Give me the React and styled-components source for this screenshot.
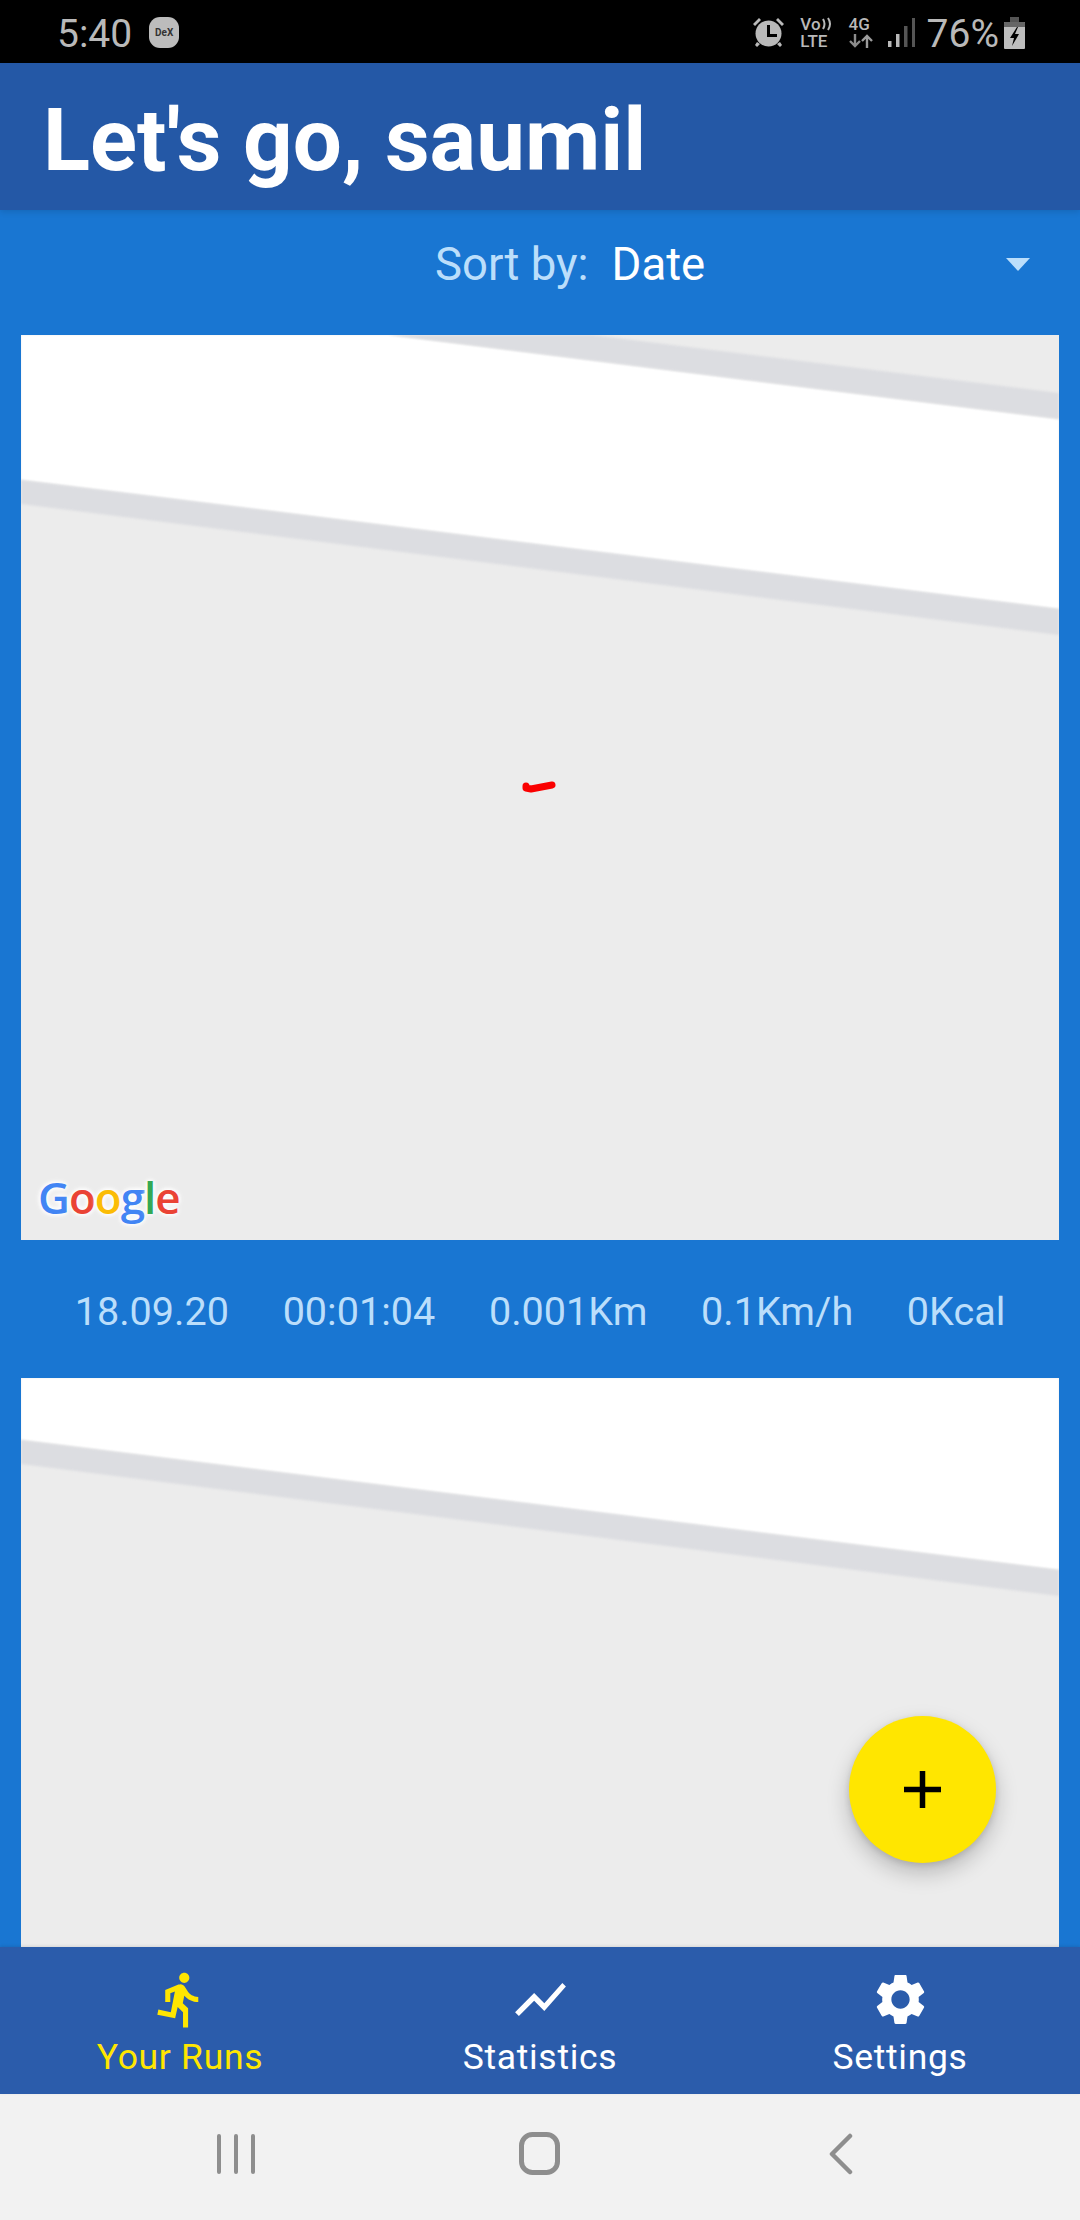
import React from "react";
import styled, { createGlobalStyle } from "styled-components";

const Global = createGlobalStyle`
  html, body { margin: 0; padding: 0; background: #1976d2; }
  * { box-sizing: border-box; }
  body { font-family: Roboto, "Liberation Sans", sans-serif; }
`;

const Screen = styled.div`
  position: relative;
  width: 1080px;
  height: 2220px;
  display: flex;
  flex-direction: column;
  overflow: hidden;
  background: #1976d2;
`;

const StatusBar = styled.div`
  height: 63px;
  flex: none;
  background: #000;
  color: #b9b9b9;
  display: flex;
  align-items: center;
  justify-content: space-between;
  padding: 2px 55px 0 57px;
`;
const StatusGroup = styled.div`
  display: flex;
  align-items: center;
  gap: ${(p) => p.$gap || 0}px;
`;
const StatusText = styled.span`
  font-size: 39px;
  line-height: 50px;
  padding-top: 3px;
  font-weight: 400;
  color: #b9b9b9;
  margin-left: ${(p) => p.$ml || 0}px;
`;
const StatusIcon = styled.span`
  display: flex;
  margin-left: ${(p) => p.$ml || 0}px;
`;
const DexBadge = styled.div`
  width: 30px;
  height: 31px;
  border-radius: 11px;
  background: #bcbcbc;
  color: #333;
  font-size: 10px;
  font-weight: 700;
  display: flex;
  align-items: center;
  justify-content: center;
`;
const TinyStack = styled.div`
  display: flex;
  flex-direction: column;
  align-items: flex-start;
  gap: 3px;
  margin-left: ${(p) => p.$ml || 0}px;
  font-weight: 500;
  font-size: 17px;
  line-height: 14px;
  color: #b9b9b9;
`;
const TinyRow = styled.div`
  display: flex;
  align-items: center;
  gap: 1px;
`;

const Header = styled.header`
  height: 147px;
  flex: none;
  position: relative;
  z-index: 2;
  background: #2458a6;
  box-shadow: 0 2px 6px rgba(0, 0, 0, 0.12);
  display: flex;
  align-items: center;
  padding: 8px 0 0 43px;
`;
const Title = styled.h1`
  margin: 0;
  color: #fff;
  font-size: 87px;
  font-weight: 700;
  line-height: 1;
`;

const Main = styled.main`
  flex: 1;
  min-height: 0;
  overflow: hidden;
  display: flex;
  flex-direction: column;
`;
const SortRow = styled.div`
  flex: none;
  height: 125px;
  display: flex;
  align-items: center;
  padding: 0 50px 16px 435px;
  font-size: 45.5px;
`;
const SortLabel = styled.span`
  color: #bbdefb;
`;
const SortValue = styled.span`
  color: #fff;
  margin-left: 23px;
`;
const Caret = styled.div`
  margin-left: auto;
  width: 0;
  height: 0;
  border-left: 12.5px solid transparent;
  border-right: 12.5px solid transparent;
  border-top: 13px solid #bbdefb;
`;

const MapCard = styled.div`
  flex: none;
  position: relative;
  width: 1038px;
  height: 905px;
  margin: 0 21px;
  background: #ececec;
  overflow: hidden;
`;
const MapSvg = styled.svg`
  display: block;
  width: 100%;
  height: 100%;
`;
const Land = styled.polygon`
  fill: #fff;
  filter: blur(1px);
`;
const Road = styled.polygon`
  fill: #dcdde1;
  filter: blur(1px);
`;
const Trace = styled.path`
  fill: none;
  stroke: #fa0000;
  stroke-width: 7px;
  stroke-linejoin: round;
  stroke-linecap: round;
`;
const GoogleMark = styled.div`
  position: absolute;
  left: 17px;
  bottom: 18px;
  font-family: "Open Sans", Roboto, sans-serif;
  font-size: 44px;
  font-weight: 600;
  line-height: 50px;
  letter-spacing: -1px;
  text-shadow: 0 0 4px #fff, 0 0 5px #fff, 0 0 7px #fff;
`;
const GLetter = styled.span`
  color: ${(p) => p.$c};
`;

const Stats = styled.div`
  flex: none;
  height: 138px;
  margin: 0 21px;
  padding-top: 5px;
  display: flex;
  align-items: center;
  justify-content: space-evenly;
  color: #bbdefb;
  font-size: 39.6px;
`;

const Fab = styled.button`
  position: absolute;
  left: 849px;
  top: 1716px;
  z-index: 3;
  width: 147px;
  height: 147px;
  border: 0;
  padding: 0;
  border-radius: 50%;
  background: #ffe600;
  box-shadow: 0 10px 22px rgba(0, 0, 0, 0.22), 0 2px 6px rgba(0, 0, 0, 0.12);
  display: flex;
  align-items: center;
  justify-content: center;
`;

const Nav = styled.nav`
  height: 147px;
  flex: none;
  position: relative;
  z-index: 2;
  background: #2b5cab;
  box-shadow: 0 -1px 3px rgba(0, 0, 0, 0.1);
  display: grid;
  grid-template-columns: repeat(3, 1fr);
`;
const NavItem = styled.div`
  display: flex;
  flex-direction: column;
  align-items: center;
  padding-top: 22px;
  color: ${(p) => (p.$active ? "#ffe600" : "#fff")};
`;
const NavLabel = styled.span`
  font-size: 35.5px;
  line-height: 40px;
  margin-top: 7px;
  letter-spacing: 0.7px;
`;

const SystemBar = styled.div`
  flex: none;
  height: 126px;
  background: #f2f2f2;
  display: grid;
  grid-template-columns: repeat(3, 1fr);
  align-items: center;
  padding-bottom: 6px;
`;
const SystemSlot = styled.div`
  display: flex;
  justify-content: center;
  padding-left: ${(p) => p.$pl || 0}px;
  padding-right: ${(p) => p.$pr || 0}px;
`;

const Alarm = () => (
  <svg width="33" height="31" viewBox="0 0 33 31" fill="#b9b9b9">
    <circle cx="16.5" cy="16.5" r="13" />
    <path d="M1 7l6-6 2 2-6 6zM32 7l-6-6-2 2 6 6zM5 25l3 2-3 3-2-2zM28 25l-3 2 3 3 2-2z" />
    <path d="M15 8h3v9h7v3H15z" fill="#000" />
  </svg>
);
const Waves = () => (
  <svg width="12" height="14" viewBox="0 0 12 14" fill="none" stroke="#b9b9b9" strokeWidth="2">
    <path d="M1 2q3 5 0 10M6 1q4 6 0 12" />
  </svg>
);
const Arrows = () => (
  <svg width="24" height="14" viewBox="0 0 24 14" fill="none" stroke="#8c8c8c" strokeWidth="2.4">
    <path d="M6 0v12M1 7l5 5 5-5" />
    <path d="M18 14V2M13 7l5-5 5 5" stroke="#9c9c9c" />
  </svg>
);
const Signal = () => (
  <svg width="27" height="31" viewBox="0 0 27 31">
    <rect x="0" y="24" width="3.5" height="6" fill="#b9b9b9" />
    <rect x="8" y="17" width="3.5" height="13" fill="#b9b9b9" />
    <rect x="16" y="9" width="3.5" height="21" fill="#555" />
    <rect x="24" y="1" width="3" height="29" fill="#555" />
  </svg>
);
const Battery = () => (
  <svg width="21" height="32" viewBox="0 0 21 32">
    <path d="M6 0h9v5H6z" fill="#555" />
    <path d="M1 5h19a1 1 0 0 1 1 1v25a1 1 0 0 1-1 1H1a1 1 0 0 1-1-1V6a1 1 0 0 1 1-1z" fill="#bdbdbd" />
    <path d="M1 5h19a1 1 0 0 1 1 1v4H0V6a1 1 0 0 1 1-1z" fill="#666" />
    <path d="M13 10l-7 11h4l-2 8 7-12h-4l3-7z" fill="#000" />
  </svg>
);

const RunIcon = () => (
  <svg width="61" height="61" viewBox="0 0 24 24" fill="currentColor">
    <path d="M13.49 5.48c1.1 0 2-.9 2-2s-.9-2-2-2-2 .9-2 2 .9 2 2 2zm-3.6 13.9l1-4.4 2.1 2v6h2v-7.5l-2.1-2 .6-3c1.3 1.5 3.3 2.5 5.5 2.5v-2c-1.9 0-3.5-1-4.3-2.4l-1-1.6c-.4-.6-1-1-1.7-1-.3 0-.5.1-.8.1l-5.2 2.2v4.7h2v-3.4l1.8-.7-1.6 8.1-4.9-1-.4 2 7 1.4z" />
  </svg>
);
const ChartIcon = () => (
  <svg width="61" height="61" viewBox="0 0 24 24" fill="currentColor">
    <path d="M3.5 18.49l6-6.01 4 4L22 6.92l-1.41-1.41-7.09 7.97-4-4L2 16.99z" />
  </svg>
);
const GearIcon = () => (
  <svg width="61" height="61" viewBox="0 0 24 24" fill="currentColor">
    <path d="M19.14 12.94c.04-.3.06-.61.06-.94 0-.32-.02-.64-.07-.94l2.03-1.58c.18-.14.23-.41.12-.61l-1.92-3.32c-.12-.22-.37-.29-.59-.22l-2.39.96c-.5-.38-1.03-.7-1.62-.94l-.36-2.54c-.04-.24-.24-.41-.48-.41h-3.84c-.24 0-.43.17-.47.41l-.36 2.54c-.59.24-1.13.57-1.62.94l-2.39-.96c-.22-.08-.47 0-.59.22L2.74 8.87c-.12.21-.08.47.12.61l2.03 1.58c-.05.3-.09.63-.09.94s.02.64.07.94l-2.03 1.58c-.18.14-.23.41-.12.61l1.92 3.32c.12.22.37.29.59.22l2.39-.96c.5.38 1.03.7 1.62.94l.36 2.54c.05.24.24.41.48.41h3.84c.24 0 .44-.17.47-.41l.36-2.54c.59-.24 1.13-.56 1.62-.94l2.39.96c.22.08.47 0 .59-.22l1.92-3.32c.12-.22.07-.47-.12-.61l-2.01-1.58zM12 15.6c-1.98 0-3.6-1.62-3.6-3.6s1.62-3.6 3.6-3.6 3.6 1.62 3.6 3.6-1.62 3.6-3.6 3.6z" />
  </svg>
);

const GOOGLE = [
  ["G", "#4285f4"],
  ["o", "#ea4335"],
  ["o", "#fbbc05"],
  ["g", "#4285f4"],
  ["l", "#34a853"],
  ["e", "#ea4335"],
];

const STATS = ["18.09.20", "00:01:04", "0.001Km", "0.1Km/h", "0Kcal"];

export default function App() {
  return (
    <Screen>
      <Global />
      <StatusBar>
        <StatusGroup $gap={17}>
          <StatusText>5:40</StatusText>
          <DexBadge>DeX</DexBadge>
        </StatusGroup>
        <StatusGroup>
          <Alarm />
          <TinyStack $ml={15}>
            <TinyRow>Vo<Waves /></TinyRow>
            <span>LTE</span>
          </TinyStack>
          <TinyStack $ml={15}>
            <span>4G</span>
            <Arrows />
          </TinyStack>
          <StatusIcon $ml={15}><Signal /></StatusIcon>
          <StatusText $ml={12}>76%</StatusText>
          <StatusIcon $ml={5}><Battery /></StatusIcon>
        </StatusGroup>
      </StatusBar>

      <Header>
        <Title>Let's go, saumil</Title>
      </Header>

      <Main>
        <SortRow>
          <SortLabel>Sort by:</SortLabel>
          <SortValue>Date</SortValue>
          <Caret />
        </SortRow>

        <MapCard>
          <MapSvg viewBox="0 0 1038 905">
            <Land points="0,0 368,0 1038,84 1038,274 0,145" />
            <Road points="368,0 571,0 1038,58 1038,84" />
            <Road points="0,145 1038,274 1038,300 0,169" />
            <Trace d="M531 450 L510 454 L505 453 L505 451" />
          </MapSvg>
          <GoogleMark>
            {GOOGLE.map(([l, c], i) => (
              <GLetter key={i} $c={c}>{l}</GLetter>
            ))}
          </GoogleMark>
        </MapCard>

        <Stats>
          {STATS.map((s) => (
            <span key={s}>{s}</span>
          ))}
        </Stats>

        <MapCard>
          <MapSvg viewBox="0 0 1038 905">
            <Land points="0,0 1038,0 1038,192 0,62" />
            <Road points="0,62 1038,192 1038,218 0,86" />
          </MapSvg>
        </MapCard>
      </Main>

      <Fab aria-label="Add">
        <svg width="37" height="37" viewBox="0 0 37 37" fill="#000">
          <path d="M15.75 0h5.5v15.75H37v5.5H21.25V37h-5.5V21.25H0v-5.5h15.75z" />
        </svg>
      </Fab>

      <Nav>
        <NavItem $active>
          <RunIcon />
          <NavLabel>Your Runs</NavLabel>
        </NavItem>
        <NavItem>
          <ChartIcon />
          <NavLabel>Statistics</NavLabel>
        </NavItem>
        <NavItem>
          <GearIcon />
          <NavLabel>Settings</NavLabel>
        </NavItem>
      </Nav>

      <SystemBar>
        <SystemSlot $pl={112}>
          <svg width="38" height="42" viewBox="0 0 38 42" stroke="#8e8e8e" strokeWidth="4" strokeLinecap="round">
            <path d="M2 3v36M19 3v36M36 3v36" />
          </svg>
        </SystemSlot>
        <SystemSlot>
          <svg width="42" height="44" viewBox="0 0 42 44" fill="none" stroke="#8e8e8e" strokeWidth="5">
            <rect x="2.5" y="2.5" width="36" height="38" rx="11" />
          </svg>
        </SystemSlot>
        <SystemSlot $pr={118}>
          <svg width="24" height="42" viewBox="0 0 24 42" fill="none" stroke="#8e8e8e" strokeWidth="4.5" strokeLinecap="round" strokeLinejoin="round">
            <path d="M21 3L3 21l18 18" />
          </svg>
        </SystemSlot>
      </SystemBar>
    </Screen>
  );
}
